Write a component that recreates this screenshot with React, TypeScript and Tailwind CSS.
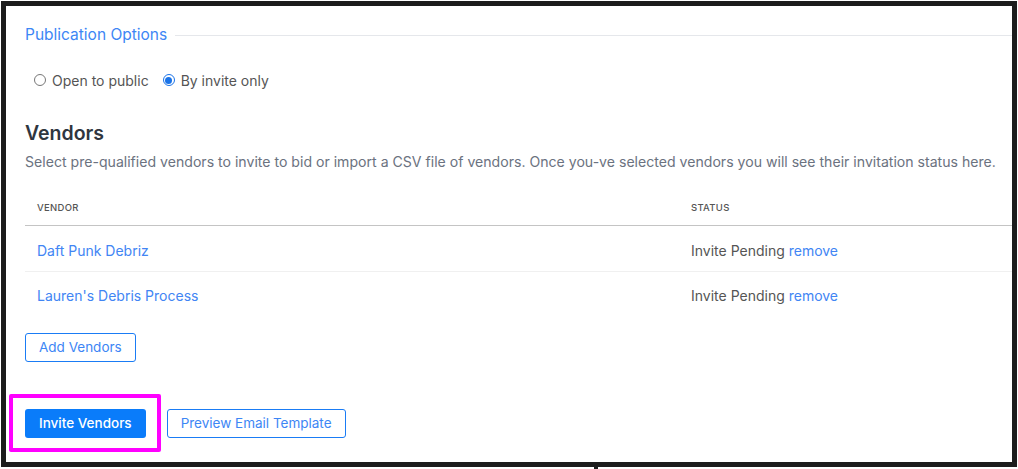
import React from "react";

const vendors = [
  { id: 1, name: "Daft Punk Debriz", status: "Invite Pending" },
  { id: 2, name: "Lauren's Debris Process", status: "Invite Pending" },
];

function Radio({ checked, label }: { checked?: boolean; label: string }) {
  return (
    <label className="flex items-center gap-[6px]">
      <span
        className={
          checked
            ? "flex h-[12px] w-[12px] items-center justify-center rounded-full border border-[#1a73e8]"
            : "h-[12px] w-[12px] rounded-full border border-[#777]"
        }
      >
        {checked && <span className="h-[7px] w-[7px] rounded-full bg-[#1a73e8]" />}
      </span>
      <span>{label}</span>
    </label>
  );
}

export default function App() {
  return (
    <div
      className="relative h-[469px] w-[1018px] overflow-hidden bg-white text-[#4b5563]"
      style={{ fontFamily: "Inter, 'Noto Sans', sans-serif" }}
    >
      <div className="ml-px mt-px h-[466px] w-[1016px] overflow-hidden border-[5px] border-[#1c1c1c]">
        <div className="flex flex-col pl-[19px] pt-[18px]">
          {/* Publication options */}
          <div className="flex h-[22px] items-center">
            <span className="text-[15.5px] text-[#3d86f5]">Publication Options</span>
            <div className="ml-[8px] h-px flex-1 bg-[#e5e7eb]" />
          </div>
          <div className="mt-[24px] flex h-[20px] items-center gap-[14px] pl-[9px] text-[14px] text-[#555]">
            <Radio label="Open to public" />
            <Radio checked label="By invite only" />
          </div>

          {/* Vendors */}
          <h2 className="mt-[30px] text-[19.5px] font-semibold leading-[26px] text-[#2f3640]">Vendors</h2>
          <p className="mt-[7px] text-[14.1px] leading-[18px] text-[#6b7280]">
            Select pre-qualified vendors to invite to bid or import a CSV file of vendors. Once you-ve selected vendors you will see their invitation status here.
          </p>

          <div className="mt-[17px]">
            <div className="flex h-[38px] items-center border-b border-[#c4c4c4] pt-[3px] text-[9.5px] font-medium tracking-[0.3px] text-[#555]">
              <div className="w-[666px] pl-[12px]">VENDOR</div>
              <div>STATUS</div>
            </div>
            {vendors.map((v, i) => (
              <div
                key={v.id}
                className={
                  i === 0
                    ? "flex h-[46px] items-center border-b border-[#f0f0f0] pt-[3px] text-[14px]"
                    : "flex h-[46px] items-center pt-[1px] text-[14px]"
                }
              >
                <div className="w-[666px] pl-[12px] text-[#4185f4]">{v.name}</div>
                <div className="text-[#555]">
                  {v.status} <span className="text-[#4185f4]">remove</span>
                </div>
              </div>
            ))}
          </div>

          <div className="mt-[15px]">
            <button className="h-[29px] rounded-[3px] border-[1.5px] border-[#1a7cf5] px-[13px] text-[13.5px] text-[#3d86f5]">
              Add Vendors
            </button>
          </div>

          <div className="mt-[47px] flex items-center gap-[6px]">
            <div className="relative">
              <button className="h-[29px] rounded-[3px] bg-[#0a7cfa] px-[14px] text-[13.5px] font-medium text-white">
                Invite Vendors
              </button>
              <div className="pointer-events-none absolute -left-[16px] -right-[15px] -top-[15px] -bottom-[14px] rounded-[2px] border-[4px] border-[#ff00ff]" />
            </div>
            <button className="ml-[15px] h-[29px] rounded-[3px] border-[1.5px] border-[#1a7cf5] px-[13px] text-[13.5px] text-[#3d86f5]">
              Preview Email Template
            </button>
          </div>
        </div>
      </div>
      <div className="absolute left-[594px] top-[462px] h-[7px] w-[4px] bg-[#1c1c1c]" />
    </div>
  );
}
